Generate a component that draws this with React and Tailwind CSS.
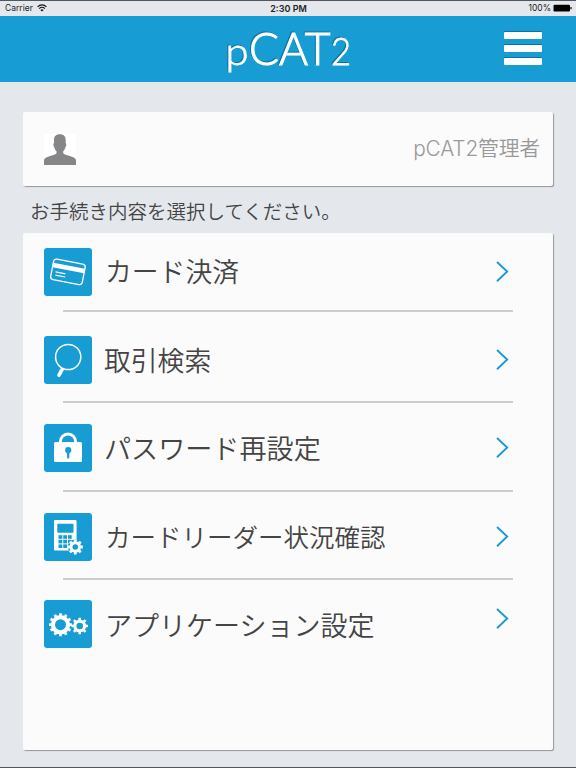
import React from 'react';

const TEETH = [0, 30, 60, 90, 120, 150, 180, 210, 240, 270, 300, 330];
const TEETH_SMALL = [0, 45, 90, 135, 180, 225, 270, 315];

function Gear({ cx, cy, r, hole, tooth, angles }) {
  return (
    <g>
      {angles.map((a) => (
        <rect
          key={a}
          x={cx - tooth / 2}
          y={cy - r - 1.9}
          width={tooth}
          height={4}
          rx="0.4"
          fill="#fff"
          transform={`rotate(${a} ${cx} ${cy})`}
        />
      ))}
      <circle cx={cx} cy={cy} r={r} fill="#fff" />
      <circle cx={cx} cy={cy} r={hole} fill="#179dd4" />
    </g>
  );
}

function CardIcon() {
  return (
    <g transform="rotate(11 23.7 24)">
      <rect x="7.8" y="13.4" width="32.2" height="20.8" rx="3" fill="none" stroke="#fff" strokeWidth="1.3" />
      <rect x="8" y="17.6" width="32" height="4.6" fill="#fff" />
      <path d="M11.8 26.2h10M12.2 29.4h10" stroke="#fff" strokeWidth="1.2" />
    </g>
  );
}

function SearchIcon() {
  return (
    <g fill="none" stroke="#fff">
      <circle cx="24.2" cy="21" r="12.6" strokeWidth="1.5" />
      <path d="M18.6 32.2l-1 2" strokeWidth="1.6" />
      <path d="M18 33.6l-3 5.6" strokeWidth="3.6" strokeLinecap="round" />
    </g>
  );
}

function LockIcon() {
  return (
    <g>
      <path d="M16.4 19v-1.4a7.6 7.6 0 0 1 15.2 0V19" fill="none" stroke="#fff" strokeWidth="2.9" />
      <rect x="10" y="18" width="28" height="20" rx="1.5" fill="#fff" />
      <circle cx="24.2" cy="26.2" r="3.1" fill="#179dd4" />
      <path d="M24.2 27v6.4" stroke="#179dd4" strokeWidth="2.3" strokeLinecap="round" />
    </g>
  );
}

function ReaderIcon() {
  return (
    <g>
      <rect x="10" y="7" width="22.6" height="30.6" rx="1.4" fill="#fff" />
      <rect x="13.3" y="10.8" width="16.2" height="9" rx="0.8" fill="#179dd4" />
      {[22.2, 26.8, 31.4].map((y) =>
        [14.5, 19.2, 23.9].map((x) => (
          <rect key={`${x}-${y}`} x={x} y={y} width="3.8" height="3.6" fill="#179dd4" />
        ))
      )}
      <circle cx="31.3" cy="34" r="7.4" fill="#179dd4" />
      <Gear cx={31.3} cy={34} r={5.7} hole={2.8} tooth={2.8} angles={TEETH_SMALL} />
    </g>
  );
}

function GearsIcon() {
  return (
    <g>
      <Gear cx={16.5} cy={24.7} r={9.6} hole={5.5} tooth={2.8} angles={TEETH} />
      <Gear cx={35.7} cy={26} r={6.4} hole={3.3} tooth={2.6} angles={TEETH_SMALL} />
    </g>
  );
}

const menu = [
  { label: 'カード決済', icon: CardIcon, row: 'h-[78px] pt-[15px]', text: 'h-[46px] pl-[13px] text-[26.8px]', chevron: 'mt-[13px]' },
  { label: '取引検索', icon: SearchIcon, row: 'h-[91px] pt-[25px]', text: 'h-[48px] pl-[12px] text-[26.8px]', chevron: 'mt-[13px]' },
  { label: 'パスワード再設定', icon: LockIcon, row: 'h-[89px] pt-[22px]', text: 'h-[48px] pl-[12px] text-[27.1px]', chevron: 'mt-[13px]' },
  { label: 'カードリーダー状況確認', icon: ReaderIcon, row: 'h-[88px] pt-[22px]', text: 'h-[46px] pl-[13px] text-[25.5px]', chevron: 'mt-[13px]' },
  { label: 'アプリケーション設定', icon: GearsIcon, row: 'h-[88px] pt-[21px]', text: 'h-[48px] pl-[13px] text-[27px]', chevron: 'mt-[8px]' },
];

function StatusBar() {
  return (
    <div className="h-[15.5px] shrink-0 border-t border-[#55565b] grid grid-cols-3 items-center pl-[5px] pr-[4px] font-['Inter','Liberation_Sans',sans-serif] font-normal text-[8.5px] leading-none text-[#222]">
      <div className="flex items-center gap-[4px]">
        <span>Carrier</span>
        <svg width="10" height="8" viewBox="0 0 10 8" fill="none" stroke="#111" strokeWidth="1.2">
          <path d="M0.6 2.8a6.2 6.2 0 0 1 8.8 0M2.2 4.6a4 4 0 0 1 5.6 0" />
          <path d="M3.4 5.9a2.3 2.3 0 0 1 3.2 0L5 7.6z" fill="#111" stroke="none" />
        </svg>
      </div>
      <span className="text-center text-[9px] font-semibold">2:30 PM</span>
      <div className="flex items-center justify-end gap-[2px]">
        <span>100%</span>
        <svg width="19" height="8" viewBox="0 0 19 8">
          <rect x="0.5" y="0.8" width="16.5" height="6.6" rx="1.2" fill="#000" />
          <rect x="17.4" y="2.9" width="1.2" height="2.4" rx="0.6" fill="#000" />
        </svg>
      </div>
    </div>
  );
}

function Header() {
  return (
    <header className="h-[66.5px] shrink-0 bg-[#179dd4] flex items-center justify-between pl-[222px] pr-[33px]">
      <svg
        width="134"
        height="66"
        viewBox="222 16 134 66"
        className="font-['Lato',sans-serif] font-light drop-shadow-[-1px_-1px_0.5px_rgba(0,50,80,0.4)]"
        fill="#fff"
        stroke="#fff"
        strokeWidth="0.8"
      >
        <text x="225.5" y="65" fontSize="38" textLength="23" lengthAdjust="spacingAndGlyphs">p</text>
        <text x="249" y="65" fontSize="44.5" strokeWidth="1.1" textLength="81.5" lengthAdjust="spacingAndGlyphs">CAT</text>
        <text x="331" y="65" fontSize="37.5" textLength="20" lengthAdjust="spacingAndGlyphs">2</text>
      </svg>
      <button aria-label="Menu" className="flex flex-col gap-[6px] pr-px drop-shadow-[0px_-1px_0.5px_rgba(0,50,80,0.4)]">
        <span className="h-[7px] w-[38.5px] rounded-[1px] bg-white"></span>
        <span className="h-[7px] w-[38.5px] rounded-[1px] bg-white"></span>
        <span className="h-[7px] w-[38.5px] rounded-[1px] bg-white"></span>
      </button>
    </header>
  );
}

export default function App() {
  return (
    <div className="flex h-[768px] w-[576px] flex-col overflow-hidden border-b border-[#55565b] bg-[#e4e8ed] font-['Noto_Sans_CJK_JP',sans-serif] font-[350] text-[#444]">
      <StatusBar />
      <Header />

      <main className="flex flex-1 flex-col pl-[23px] pr-[23px] pt-[30px]">
        {/* Signed-in user */}
        <section className="flex h-[74px] items-center justify-between rounded-[2px] bg-[#fbfbfb] pl-[21px] pr-[13px] shadow-[1px_1px_1px_#94969b]">
          <svg width="32" height="31" viewBox="0 0 32 31" className="bg-white">
            <path
              d="M15.8 0.3C12 0.3 10 2.4 10 6v3C9 9.400 9.200 11.800 10.200 13.200C10.700 15 11.500 16.300 12.500 17.200V19.200C10 22 0.500 22 0 26V31H32V26C31.500 22 22 22 19.200 19.200V17.200C20.200 16.300 21 15 21.500 13.200C22.500 11.800 22.700 9.400 21.700 9V6C21.700 2.400 19.600 0.300 15.800 0.300z"
              fill="#858688"
            />
          </svg>
          <span className="pt-px font-['Inter','Noto_Sans_CJK_JP',sans-serif] text-[20.8px] leading-none tracking-[-0.15px] text-[#999]">pCAT2管理者</span>
        </section>

        <p className="flex h-[47px] items-center pl-[7px] pt-[2px] text-[19.5px] leading-none">お手続き内容を選択してください。</p>

        {/* Menu */}
        <nav className="h-[517px] rounded-[2px] bg-[#fbfbfb] shadow-[1px_1px_1px_#94969b]">
          {menu.map((item, i) => {
            const Glyph = item.icon;
            return (
              <div key={item.label}>
                <a href="#" className={`flex items-start pl-[21px] pr-[44px] ${item.row}`}>
                  <svg width="48" height="48" viewBox="0 0 48 48" className="shrink-0 rounded-[3px] bg-[#179dd4]">
                    <Glyph />
                  </svg>
                  <span className={`flex flex-1 items-center whitespace-nowrap leading-none ${item.text}`}>{item.label}</span>
                  <svg width="13" height="22" viewBox="0 0 13 22" fill="none" stroke="#179dd4" strokeWidth="1.9" className={item.chevron}>
                    <path d="M1 1l10.2 9.5L1 20.2" />
                  </svg>
                </a>
                {i < menu.length - 1 && <div className="-mt-px ml-[40px] h-[1.5px] w-[450px] -mb-[0.5px] bg-[#cdcdcd]"></div>}
              </div>
            );
          })}
        </nav>
      </main>
    </div>
  );
}
